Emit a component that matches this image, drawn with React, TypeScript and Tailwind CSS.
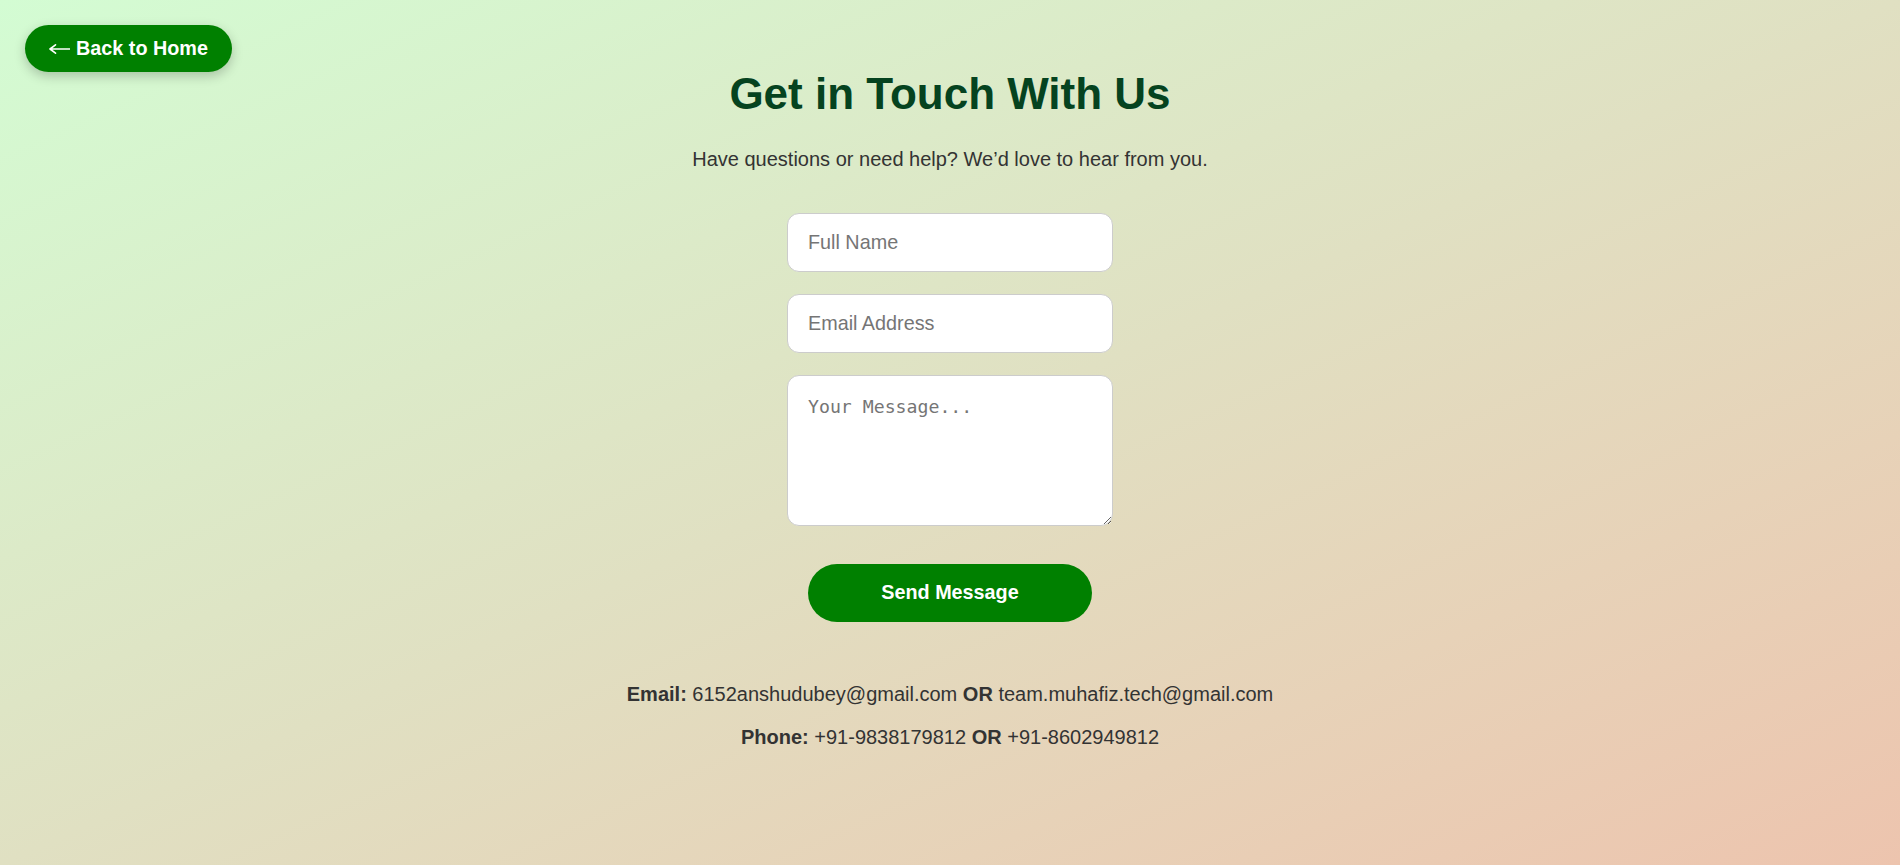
import React from "react";

const sans = "font-['Liberation_Sans',Arial,sans-serif]";

const BackArrow = () => (
  <svg width="21" height="12" viewBox="0 0 21 12" fill="none" className="mr-[6px]">
    <path d="M1 6H20.5M1 6L6.5 1.8M1 6L6.5 10.2" stroke="white" strokeWidth="1.6" strokeLinecap="round" />
  </svg>
);

export default function App() {
  return (
    <div
      className={`relative min-h-[865px] w-full bg-linear-to-br from-[#d3fcd3] via-[#e0e0c2] to-[#edc4ae] ${sans}`}
    >
      <a
        href="#"
        className="absolute left-[25px] top-[25px] flex h-[47px] w-[207px] items-center justify-center rounded-full bg-[#008000] text-[19.8px] font-bold text-white shadow-[0_4px_12px_rgba(0,0,0,0.22)]"
      >
        <BackArrow />
        Back to Home
      </a>

      <main className="flex flex-col items-center pt-[68px]">
        <h1 className="text-[44px] leading-[51px] font-bold text-[#05431f]">
          Get in Touch With Us
        </h1>
        <p className="mt-[29px] text-[20px] leading-[23px] text-[#333333]">
          Have questions or need help? We’d love to hear from you.
        </p>

        <form
          className="mt-[42px] flex flex-col items-center"
          onSubmit={(e) => e.preventDefault()}
        >
          <div className="flex flex-col gap-[22px]">
            <input
              type="text"
              placeholder="Full Name"
              className="h-[59px] w-[326px] rounded-[12px] border border-[#cccccc] bg-white px-[20px] text-[19.8px] text-[#333] outline-none placeholder:text-[#757575]"
            />
            <input
              type="email"
              placeholder="Email Address"
              className="h-[59px] w-[326px] rounded-[12px] border border-[#cccccc] bg-white px-[20px] text-[19.8px] text-[#333] outline-none placeholder:text-[#757575]"
            />
            <textarea
              placeholder="Your Message..."
              className="block h-[151px] w-[326px] rounded-[12px] border border-[#cccccc] bg-white px-[20px] pt-[17px] font-['DejaVu_Sans_Mono',monospace] text-[18.2px] text-[#333] outline-none placeholder:text-[#757575]"
            />
          </div>
          <button
            type="submit"
            className="mt-[38px] h-[58px] w-[284px] rounded-full bg-[#008000] text-[19.8px] font-bold text-white"
          >
            Send Message
          </button>
        </form>

        <div className="mt-[61px] flex flex-col items-center gap-[20px] text-[20px] leading-[23px] text-[#333333]">
          <p>
            <strong>Email:</strong> 6152anshudubey@gmail.com <strong>OR</strong>{" "}
            team.muhafiz.tech@gmail.com
          </p>
          <p>
            <strong>Phone:</strong> +91-9838179812 <strong>OR</strong> +91-8602949812
          </p>
        </div>
      </main>
    </div>
  );
}
